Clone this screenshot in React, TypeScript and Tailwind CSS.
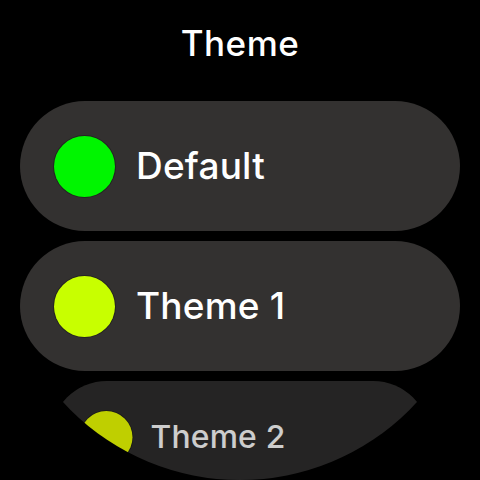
import React from "react";

const items = [
  { label: "Default", color: "bg-[#00f500]" },
  { label: "Theme 1", color: "bg-[#c8ff00]" },
];

export default function App() {
  return (
    <div className="w-[480px] h-[480px] bg-black overflow-hidden">
      <div
        className="relative w-[480px] h-[480px] rounded-full overflow-hidden bg-black flex flex-col items-center"
        style={{ fontFamily: "Inter, 'Noto Sans', sans-serif" }}
      >
        <div className="h-[101px] shrink-0 w-full flex justify-center pt-[22px]">
          <span className="text-white text-[35px] font-medium leading-[42px] tracking-[0.5px]">Theme</span>
        </div>
        <div className="flex flex-col gap-[10px] w-[440px] shrink-0">
          {items.map((it) => (
            <div
              key={it.label}
              className="h-[130px] shrink-0 w-[440px] rounded-full bg-[#333130] flex items-center pl-[34px] gap-[21px]"
            >
              <div className={`w-[61px] h-[61px] shrink-0 rounded-full ${it.color} ring-1 ring-black/30`} />
              <span className="text-white text-[37px] font-medium tracking-[0.2px]">{it.label}</span>
            </div>
          ))}
          <div className="h-[130px] shrink-0 w-[440px] rounded-full bg-[#2a2928] flex items-center pl-[34px] gap-[21px] origin-top scale-[0.86] opacity-90">
            <div className="w-[61px] h-[61px] shrink-0 rounded-full bg-[#d4e600] ring-1 ring-black/30" />
            <span className="text-[#e4e4e4] text-[37px] font-medium tracking-[0.2px]">Theme 2</span>
          </div>
        </div>
        <div
          className="pointer-events-none absolute inset-0 rounded-full"
          style={{
            background:
              "radial-gradient(circle at 50% 50%, rgba(0,0,0,0) 80%, rgba(0,0,0,0.35) 90%, rgba(0,0,0,0.85) 96%, rgba(0,0,0,1) 99%)",
          }}
        />
      </div>
    </div>
  );
}
